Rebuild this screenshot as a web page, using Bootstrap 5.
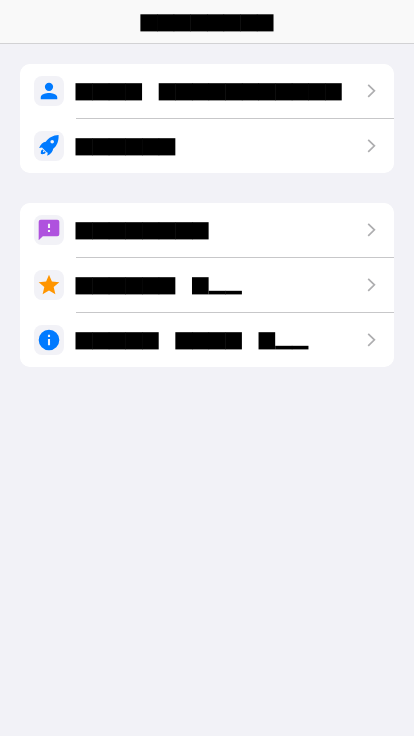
<!DOCTYPE html>
<html lang="en">
<head>
<meta charset="utf-8">
<meta name="viewport" content="width=device-width, initial-scale=1">
<title>Settings</title>
<link rel="stylesheet" href="https://cdn.jsdelivr.net/npm/bootstrap@5.3.0/dist/css/bootstrap.min.css">
<style>
body { background: #f2f2f7; font-family: "Liberation Sans", sans-serif; min-height: 736px; }
.top-bar { height: 44px; background: #f9f9f9; border-bottom: 1px solid #d2d2d4; }
.top-bar .block-label { margin-top: 3px; }
.sections { padding: 20px; gap: 30px; }
.sections .list-group { --bs-list-group-border-width: 0; border-radius: 10px; overflow: hidden; background: #fff; }
.sections .list-group-item { padding: 0 0 0 14px; gap: 11px; }
.icon-tile { width: 30px; height: 30px; border-radius: 8px; background: #f2f2f7; }
.row-body { height: 54px; padding-right: 17px; position: relative; }
.list-group-item + .list-group-item { height: 55px; }
.list-group-item + .list-group-item .row-body { height: 55px; padding-top: 1px; }
.list-group-item + .list-group-item .icon-tile { margin-top: 1px; }
.list-group-item + .list-group-item .row-body::before { content: ""; position: absolute; left: 1px; right: 0; top: 0; height: 1px; background: #c7c7c9; }
.block-label { display: block; }
.row-body .block-label { margin-top: 2px; }
.chevron { fill: none; stroke: #aeaeb0; stroke-width: 1.7; }
.blue { fill: #007aff; } .purple { fill: #af52de; } .orange { fill: #ff9500; }
</style>
<script src="https://cdn.jsdelivr.net/npm/bootstrap@5.3.0/dist/js/bootstrap.bundle.min.js"></script>
</head>
<body>
<header class="top-bar d-flex align-items-center justify-content-center">
  <svg class="block-label" data-blocks="xxxxxxxx" data-x="0.4" data-y="0.3"></svg>
</header>
<main class="sections d-flex flex-column">
  <div class="list-group">
    <a class="list-group-item d-flex align-items-center">
      <span class="icon-tile d-flex align-items-center justify-content-center flex-shrink-0"><svg class="blue" width="26" height="26" viewBox="-.6 -.6 25.2 25.2"><path d="M12 12a4 4 0 1 0 0-8 4 4 0 0 0 0 8zm0 2c-2.67 0-8 1.34-8 4v2h16v-2c0-2.66-5.33-4-8-4z"/></svg></span>
      <span class="row-body d-flex align-items-center justify-content-between flex-grow-1"><svg class="block-label" data-blocks="xxxx xxxxxxxxxxx"></svg></span>
    </a>
    <a class="list-group-item d-flex align-items-center">
      <span class="icon-tile d-flex align-items-center justify-content-center flex-shrink-0"><svg class="blue" width="30" height="30" viewBox="0 0 30 30"><path fill-rule="evenodd" d="M24.6 3.9C19 4.1 14.8 6.5 11.8 10.7c-2.7.2-5.2 2.6-6.7 6.4l2.9-.5 1.2 1.2 3.4 3.4 1.2.6-.6 3c3.4-1.6 5.7-4.1 6-7 4-3.2 5.6-8.1 5.4-13.9zM18.2 9a1.8 1.8 0 1 1 0 3.6 1.8 1.8 0 0 1 0-3.6z"/><path d="M8.6 18.4c-1.5.4-2 2-1.7 4.7 2.7.3 4.5-.3 4.8-1.8l-1.1-1c-.3.8-1 1.1-1.7 1 0-.8.2-1.4.9-1.7z"/></svg></span>
      <span class="row-body d-flex align-items-center justify-content-between flex-grow-1"><svg class="block-label" data-blocks="xxxxxx"></svg></span>
    </a>
  </div>
  <div class="list-group">
    <a class="list-group-item d-flex align-items-center">
      <span class="icon-tile d-flex align-items-center justify-content-center flex-shrink-0"><svg class="purple" width="26" height="26" viewBox="-.6 -.6 25.2 25.2"><path d="M20 2H4a2 2 0 0 0-2 2v18l4-4h14a2 2 0 0 0 2-2V4a2 2 0 0 0-2-2zm-7 12h-2v-2h2v2zm0-4h-2V6h2v4z"/></svg></span>
      <span class="row-body d-flex align-items-center justify-content-between flex-grow-1"><svg class="block-label" data-blocks="xxxxxxxx"></svg></span>
    </a>
    <a class="list-group-item d-flex align-items-center">
      <span class="icon-tile d-flex align-items-center justify-content-center flex-shrink-0"><svg class="orange" width="26" height="26" viewBox="-.6 -.6 25.2 25.2"><path d="M12 17.27 18.18 21l-1.64-7.03L22 9.24l-7.19-.61L12 2 9.19 8.63 2 9.24l5.46 4.73L5.82 21z"/></svg></span>
      <span class="row-body d-flex align-items-center justify-content-between flex-grow-1"><svg class="block-label" data-blocks="xxxxxx xpp"></svg></span>
    </a>
    <a class="list-group-item d-flex align-items-center">
      <span class="icon-tile d-flex align-items-center justify-content-center flex-shrink-0"><svg class="blue" width="26" height="26" viewBox="-.6 -.6 25.2 25.2"><path d="M12 2a10 10 0 1 0 0 20 10 10 0 0 0 0-20zm1 15h-2v-6h2v6zm0-8h-2V7h2v2z"/></svg></span>
      <span class="row-body d-flex align-items-center justify-content-between flex-grow-1"><svg class="block-label" data-blocks="xxxxx xxxx xpp"></svg></span>
    </a>
  </div>
</main>
<script>
// Draws each label as a run of solid cells: x = full cell, p = low cell, space = gap.
const NS = "http://www.w3.org/2000/svg", CELL = 16.64;
document.querySelectorAll(".block-label").forEach(svg => {
  const s = svg.dataset.blocks, x0 = +(svg.dataset.x || 0.5), y0 = +(svg.dataset.y || 0.2);
  svg.setAttribute("width", 2 * Math.ceil((s.length * CELL + x0) / 2));
  svg.setAttribute("height", 18);
  [...s].forEach((c, i) => {
    if (c === " ") return;
    const r = document.createElementNS(NS, "rect"), low = c === "p";
    r.setAttribute("x", x0 + i * CELL);
    r.setAttribute("y", low ? 13.8 : y0);
    // Cells overlap slightly so that a run reads as one bar.
    r.setAttribute("width", CELL + (i + 1 < s.length && s[i + 1] !== " " && s[i + 1] === c ? 0.5 : 0));
    r.setAttribute("height", low ? 3.6 : 17.4 - y0);
    svg.appendChild(r);
  });
});
// Every row ends in the same disclosure arrow.
document.querySelectorAll(".row-body").forEach(row => {
  row.insertAdjacentHTML("beforeend", '<svg class="chevron" width="10" height="16" viewBox="0 0 10 16"><path d="M1.2 1.8 7.4 7.8 1.2 13.8"/></svg>');
});
</script>
</body>
</html>
